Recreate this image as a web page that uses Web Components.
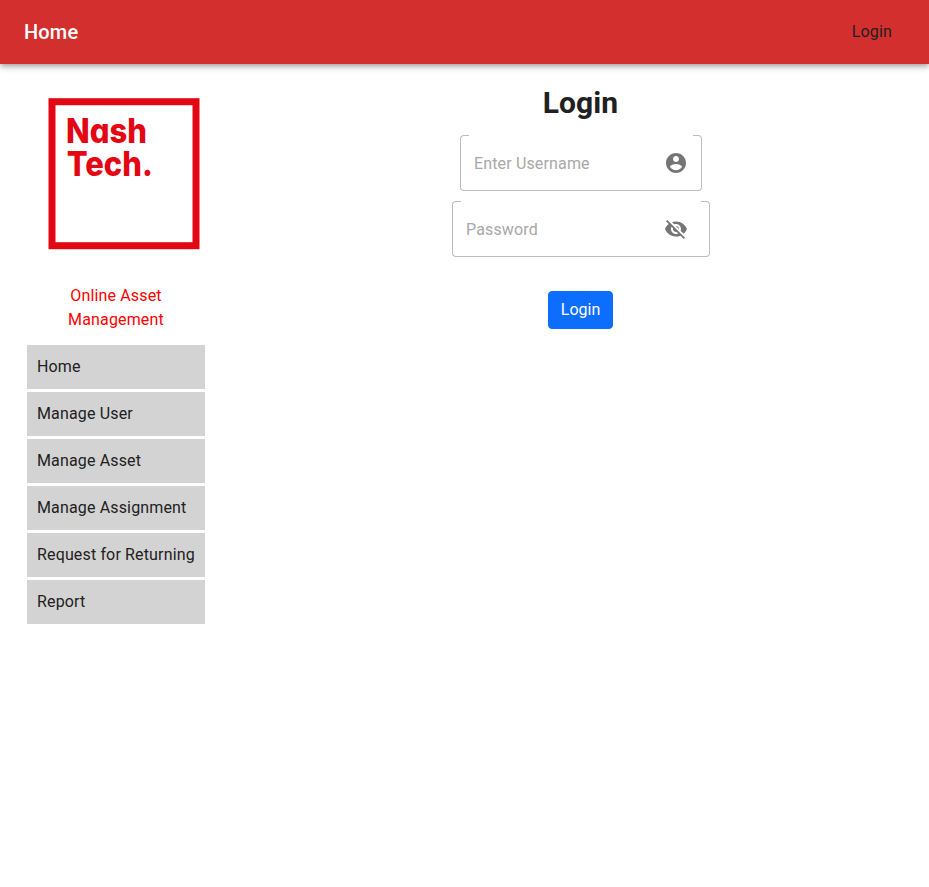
<!DOCTYPE html>
<html lang="en">
<head>
<meta charset="utf-8">
<title>Online Asset Management</title>
<style>
body{margin:0;background:#fff;color:#212121;font:400 16px/24px Roboto,sans-serif;letter-spacing:.15px}
</style>
</head>
<body>
<asset-app></asset-app>
<script>
const define = (name, html) => {
  const t = document.createElement('template');
  t.innerHTML = html;
  customElements.define(name, class extends HTMLElement {
    constructor() {
      super();
      this.attachShadow({mode: 'open'}).append(t.content.cloneNode(true));
    }
  });
};

define('app-header', `<style>
:host{display:flex;box-sizing:border-box;height:64px;padding:0 37px 0 24px;align-items:center;justify-content:space-between;background:#d32f2f;box-shadow:0 2px 4px -1px rgba(0,0,0,.2),0 4px 5px rgba(0,0,0,.14),0 1px 10px rgba(0,0,0,.12)}
.title{font-size:20px;font-weight:500;line-height:32px;letter-spacing:.15px;color:#fff}
</style><span class="title"><slot name="title"></slot></span><slot></slot>`);

define('brand-logo', `<style>:host{display:block;width:152px;height:152px}svg{display:block}
text{font-family:Inter,sans-serif;font-weight:800;font-size:34px;letter-spacing:0;font-feature-settings:"cv11"}</style>
<svg width="152" height="152" viewBox="0 0 152 152" fill="#e30613"><rect x="4" y="3.7" width="144" height="144" fill="none" stroke="#e30613" stroke-width="7"/>
<text x="18" y="44.5" textLength="81" lengthAdjust="spacingAndGlyphs">Nash</text>
<text x="18.8" y="77.5" textLength="86" lengthAdjust="spacingAndGlyphs">Tech.</text></svg>`);

define('nav-item', `<style>:host{display:block;padding:10px;background:lightgray;white-space:nowrap}</style><slot></slot>`);

define('side-bar', `<style>
:host{display:flex;flex-direction:column;width:178px}
.logo{margin:0 0 34px 21px}
.caption{width:178px;text-align:center;color:red}
.caption div{width:110px;margin:0 auto}
nav{display:grid;grid-template-columns:178px;gap:3px;margin-top:13px}
</style><brand-logo class="logo"></brand-logo><div class="caption"><div>Online Asset Management</div></div><nav><slot></slot></nav>`);

define('text-field', `<style>
:host{display:flex;height:56px;color:#a8a8a8}
.start,.end{box-sizing:border-box;width:9px;height:56px;border:1px solid #bdbdbd;flex:none}
.start{border-right:0;border-radius:4px 0 0 4px}
.end{border-left:0;border-radius:0 4px 4px 0}
.mid{flex:1;box-sizing:border-box;height:56px;border-bottom:1px solid #bdbdbd;display:flex;align-items:center;justify-content:space-between;padding:1px var(--inset,5px) 0 5px}
.label{padding-top:2px}
::slotted(svg){width:24px;height:24px;fill:#757575}
</style><span class="start"></span><span class="mid"><span class="label"><slot></slot></span><slot name="icon"></slot></span><span class="end"></span>`);

define('primary-button', `<style>
:host{display:block}
button{display:block;box-sizing:border-box;width:65px;height:38px;padding:0;border:1px solid #0d6efd;border-radius:4px;background:#0d6efd;color:#fff;font:inherit;letter-spacing:0}
</style><button><slot></slot></button>`);

define('login-form', `<style>
:host{display:flex;flex-direction:column;align-items:center;width:258px}
h1{margin:0 1px 14px 0;font-size:30px;line-height:36px;font-weight:700;letter-spacing:.1px}
.user{width:242px;margin-bottom:10px}
.pass{width:258px;--inset:13px}
primary-button{margin:34px 1px 0 0}
</style><h1>Login</h1>
<text-field class="user">Enter Username<svg slot="icon" viewBox="0 0 24 24"><path d="M12 2C6.48 2 2 6.48 2 12s4.48 10 10 10 10-4.48 10-10S17.52 2 12 2zm0 3c1.66 0 3 1.34 3 3s-1.34 3-3 3-3-1.34-3-3 1.34-3 3-3zm0 14.2c-2.5 0-4.71-1.28-6-3.22.03-1.99 4-3.08 6-3.08 1.99 0 5.97 1.09 6 3.08-1.29 1.94-3.5 3.22-6 3.22z"/></svg></text-field>
<text-field class="pass">Password<svg slot="icon" viewBox="0 0 24 24"><path d="M12 7c2.76 0 5 2.24 5 5 0 .65-.13 1.26-.36 1.83l2.92 2.92c1.51-1.26 2.7-2.89 3.43-4.75-1.73-4.39-6-7.5-11-7.5-1.4 0-2.74.25-3.98.7l2.16 2.16C10.74 7.13 11.35 7 12 7zM2 4.27l2.28 2.28.46.46C3.08 8.3 1.78 10.02 1 12c1.73 4.39 6 7.5 11 7.5 1.55 0 3.03-.3 4.38-.84l.42.42L19.73 22 21 20.73 3.27 3 2 4.27zM7.53 9.8l1.55 1.55c-.05.21-.08.43-.08.65 0 1.66 1.34 3 3 3 .22 0 .44-.03.65-.08l1.55 1.55c-.67.33-1.41.53-2.2.53-2.76 0-5-2.24-5-5 0-.79.2-1.53.53-2.2zm4.31-.78l3.15 3.15.02-.16c0-1.66-1.34-3-3-3l-.17.01z"/></svg></text-field>
<primary-button>Login</primary-button>`);

define('asset-app', `<style>
:host{display:block}
main{display:grid;grid-template-columns:178px 258px;column-gap:247px;align-items:start;padding:21px 0 0 27px}
side-bar{margin-top:13px}
</style>
<app-header><span slot="title">Home</span><span>Login</span></app-header>
<main><side-bar><nav-item>Home</nav-item><nav-item>Manage User</nav-item><nav-item>Manage Asset</nav-item><nav-item>Manage Assignment</nav-item><nav-item>Request for Returning</nav-item><nav-item>Report</nav-item></side-bar><login-form></login-form></main>`);
</script>
</body>
</html>
